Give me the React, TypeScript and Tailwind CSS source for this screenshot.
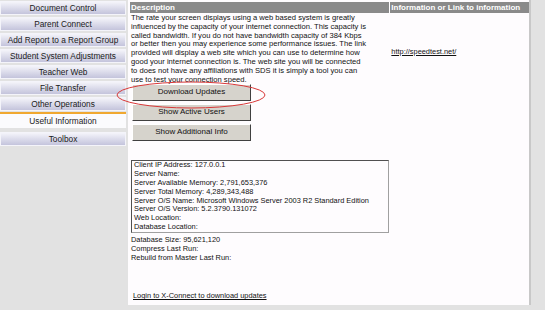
import React from "react"

const navItems = [
  "Document Control",
  "Parent Connect",
  "Add Report to a Report Group",
  "Student System Adjustments",
  "Teacher Web",
  "File Transfer",
  "Other Operations",
]

const description = [
  "The rate your screen displays using a web based system is greatly",
  "influenced by the capacity of your internet connection. This capacity is",
  "called bandwidth. If you do not have bandwidth capacity of 384 Kbps",
  "or better then you may experience some performance issues. The link",
  "provided will display a web site which you can use to determine how",
  "good your internet connection is. The web site you will be connected",
  "to does not have any affiliations with SDS it is simply a tool you can",
  "use to test your connection speed.",
]

const serverInfo = [
  "Client IP Address: 127.0.0.1",
  "Server Name:",
  "Server Available Memory: 2,791,653,376",
  "Server Total Memory: 4,289,343,488",
  "Server O/S Name: Microsoft Windows Server 2003 R2 Standard Edition",
  "Server O/S Version: 5.2.3790.131072",
  "Web Location:",
  "Database Location:",
]

function NavButton({ label }: { label: string }) {
  return (
    <div className="h-[14px] flex items-center justify-center border border-[#f4f4fa] bg-gradient-to-b from-[#f4f4fa] to-[#c4c4dc] text-[8.3px] leading-none text-[#1a1a1a]">
      {label}
    </div>
  )
}

function GrayButton({ label }: { label: string }) {
  return (
    <div className="w-[119px] h-[17px] flex items-center justify-center bg-[#d6d3cc] border border-t-white border-l-white border-r-[#404040] border-b-[#404040] text-[8px] text-[#111]">
      {label}
    </div>
  )
}

export default function App() {
  return (
    <div
      className="w-[545px] h-[310px] bg-[#e2e2e2] flex overflow-hidden"
      style={{ fontFamily: '"Liberation Sans", Arial, sans-serif' }}
    >
      <nav className="w-[126px] pt-[1px] flex flex-col">
        <div className="flex flex-col gap-[2px]">
          {navItems.map((item) => (
            <NavButton key={item} label={item} />
          ))}
        </div>
        <div className="mt-[1px] h-[2px] bg-[#f0a830]" />
        <div className="h-[14px] flex items-center justify-center bg-[#fbfbfd] text-[8.3px] text-[#1a1a1a]">
          Useful Information
        </div>
        <div className="mt-[4px]">
          <NavButton label="Toolbox" />
        </div>
      </nav>

      <main className="relative ml-[2px] mb-[5px] w-[403px] bg-[#fefcfe] border-r-2 border-[#c8c8c8] flex text-[7.6px] leading-[8.8px] text-[#111]">
        <section className="w-[262px] pl-[2px] flex flex-col">
          <div className="mt-[2px] h-[11px] bg-[#8a8a8a] text-white font-bold text-[8px] leading-[11px] pl-[1px]">
            Description
          </div>
          <div className="pl-[1px] pt-[1px] whitespace-nowrap">
            {description.map((line) => (
              <div key={line}>{line}</div>
            ))}
          </div>
          <div className="pl-[2px] flex flex-col gap-[3px]">
            <GrayButton label="Download Updates" />
            <GrayButton label="Show Active Users" />
            <GrayButton label="Show Additional Info" />
          </div>
          <div className="mt-[19px] ml-[1px] w-[258px] h-[73px] border border-t-[#505050] border-l-[#505050] border-r-[#a0a0a0] border-b-[#a0a0a0] px-[2px] text-[7.4px] leading-[8.8px] whitespace-nowrap overflow-hidden">
            {serverInfo.map((line) => (
              <div key={line}>{line}</div>
            ))}
          </div>
          <div className="mt-[3px] pl-[1px] text-[7.4px] leading-[8.9px]">
            <div>Database Size: 95,621,120</div>
            <div>Compress Last Run:</div>
            <div>Rebuild from Master Last Run:</div>
          </div>
          <div className="mt-[28px] pl-[3px] text-[7.4px] leading-[9px]">
            <span className="underline">Login to X-Connect to download updates</span>
          </div>
        </section>

        <section className="w-[139px] ml-[1px] flex flex-col">
          <div className="mt-[2px] h-[11px] bg-[#8a8a8a] text-white font-bold text-[8px] leading-[11px] pl-[1px] whitespace-nowrap overflow-hidden">
            Information or Link to information
          </div>
          <div className="mt-[34px] pl-[1px] text-[7.4px] leading-[9px]">
            <span className="underline">http://speedtest.net/</span>
          </div>
        </section>

        <svg
          className="absolute left-[-13px] top-[80px]"
          width="152"
          height="30"
          viewBox="0 0 152 30"
        >
          <ellipse cx="76" cy="15" rx="74" ry="13" fill="none" stroke="#d83838" strokeWidth="1" />
        </svg>
      </main>
    </div>
  )
}
